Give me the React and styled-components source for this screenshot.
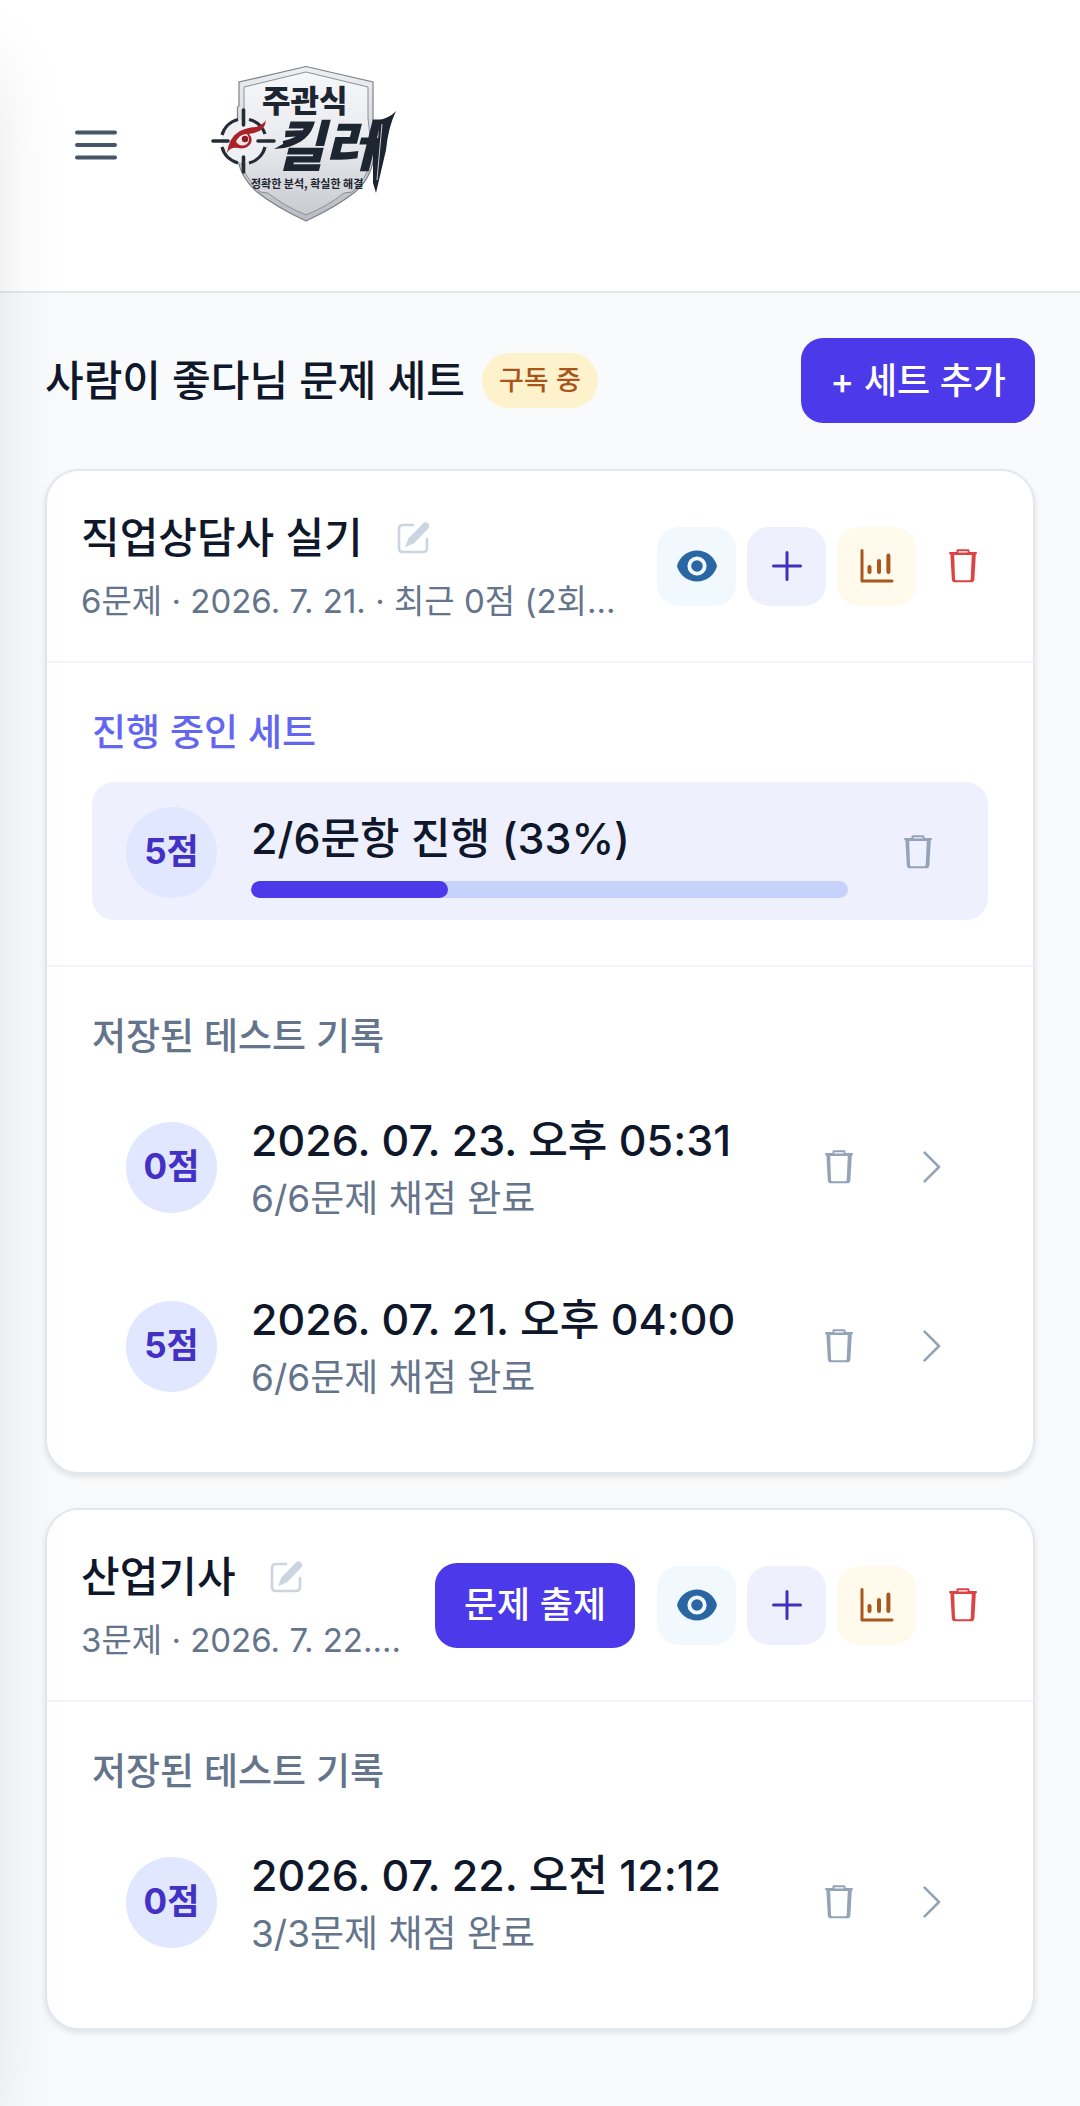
import React from "react";
import styled, { createGlobalStyle } from "styled-components";

const GlobalStyle = createGlobalStyle`
  *, *::before, *::after { box-sizing: border-box; }
  body {
    margin: 0;
    background: #f9fafc;
    color: #0f172a;
    font-family: Inter, "Noto Sans CJK KR", sans-serif;
    overflow-x: hidden;
  }
  button { font: inherit; border: 0; padding: 0; background: none; cursor: pointer; }
  h1, h2, h3, p, ul { margin: 0; padding: 0; }
  ul { list-style: none; }
  svg { display: block; flex: none; }
`;

const Page = styled.div`
  min-height: 100vh;
`;

const Drawer = styled.aside`
  position: fixed;
  inset: 0 auto 0 0;
  width: 720px;
  transform: translateX(-100%);
  background: #fff;
  box-shadow: 0 50px 80px -20px rgba(0, 0, 0, 0.15);
  pointer-events: none;
  z-index: 2;
`;

const Header = styled.header`
  display: flex;
  align-items: center;
  gap: 23px;
  padding: 33px 45px 35px;
  background: #fff;
  border-bottom: 2px solid #e2e8f0;
`;

const MenuButton = styled.button`
  display: grid;
  place-items: center;
  width: 102px;
  height: 102px;
  color: #475569;
`;

const Main = styled.main`
  padding: 45px 45px 76px;
`;

const TitleBar = styled.div`
  display: flex;
  align-items: center;
  justify-content: space-between;
  margin-bottom: 46px;
`;

const TitleGroup = styled.div`
  display: flex;
  align-items: center;
  gap: 17px;
`;

const PageTitle = styled.h1`
  font-size: 42px;
  line-height: 64px;
  font-weight: 500;
`;

const Badge = styled.span`
  padding: 0 17px;
  border-radius: 28px;
  background: #fdf2cc;
  color: #a8551c;
  font-size: 27px;
  line-height: 55px;
  font-weight: 500;
`;

const PrimaryButton = styled.button`
  height: 85px;
  padding: 0 29px;
  border-radius: 22px;
  background: #4b39ea;
  color: #fff;
  font-size: 36px;
  line-height: 56px;
  font-weight: 500;
  white-space: nowrap;
`;

const CardList = styled.div`
  display: flex;
  flex-direction: column;
  gap: 34px;
`;

const Card = styled.article`
  border: 2px solid #e2e8f0;
  border-radius: 34px;
  background: #fff;
  box-shadow: 0 3px 6px rgba(0, 0, 0, 0.1);
`;

const CardHead = styled.div`
  display: flex;
  align-items: center;
  gap: 22px;
  padding: 31px 34px;
`;

const CardInfo = styled.div`
  flex: 1;
  min-width: 0;
  padding-top: 2px;
`;

const CardTitleRow = styled.div`
  display: flex;
  align-items: center;
  gap: 34px;
  height: 68px;
`;

const CardTitle = styled.h2`
  font-size: 42px;
  line-height: 68px;
  font-weight: 500;
`;

const EditButton = styled.button`
  color: #cbd5e1;
`;

const Meta = styled.p`
  color: #64748b;
  font-size: 33px;
  line-height: 58px;
  white-space: nowrap;
`;

const Actions = styled.div`
  display: flex;
  align-items: center;
  gap: 11px;
`;

const IconButton = styled.button`
  display: grid;
  place-items: center;
  width: ${(p) => (p.$bg ? "79px" : "72px")};
  height: 79px;
  border-radius: 22px;
  background: ${(p) => p.$bg || "none"};
  color: ${(p) => p.$color || "#94a3b8"};
`;

const Section = styled.section`
  padding: 45px;
  border-top: 2px solid #f1f5f9;
`;

const SectionTitle = styled.h3`
  margin-bottom: 24px;
  color: ${(p) => (p.$active ? "#6366f1" : "#64748b")};
  font-size: 37px;
  line-height: 50px;
  font-weight: 500;
`;

const ProgressRow = styled.div`
  display: flex;
  align-items: center;
  gap: 34px;
  padding: 24px 34px 22px;
  border-radius: 22px;
  background: #eef0fe;
`;

const Score = styled.span`
  display: grid;
  place-items: center;
  flex: none;
  width: 91px;
  height: 91px;
  padding-bottom: 8px;
  border-radius: 50%;
  background: #e0e7ff;
  color: #4330c4;
  font-size: 35px;
  font-weight: 700;
`;

const RowText = styled.div`
  flex: 1;
  min-width: 0;
`;

const RowTitle = styled.p`
  font-size: 43px;
  line-height: 64px;
  font-weight: 500;
  white-space: nowrap;
`;

const RowSub = styled.p`
  color: #64748b;
  font-size: 37px;
  line-height: 54px;
`;

const Track = styled.div`
  height: 17px;
  margin-top: 11px;
  border-radius: 9px;
  background: #c7d2fb;
  overflow: hidden;
`;

const Fill = styled.div`
  height: 100%;
  border-radius: 9px;
  background: #4b39ea;
`;

const RecordList = styled.ul`
  display: flex;
  flex-direction: column;
  gap: 17px;
`;

const RecordRow = styled.li`
  display: flex;
  align-items: center;
  gap: 34px;
  padding: 22px 34px;
`;

const OpenButton = styled.button`
  display: grid;
  place-items: center;
  width: 45px;
  height: 79px;
  color: #94a3b8;
`;

const MenuIcon = () => (
  <svg width="42" height="30" viewBox="0 0 42 30" fill="none" stroke="currentColor" strokeWidth="4" strokeLinecap="round" aria-hidden="true">
    <path d="M2 2.5H40M2 15H40M2 27.5H40" />
  </svg>
);

const EditIcon = () => (
  <svg width="34" height="34" viewBox="0 0 34 34" fill="none" aria-hidden="true">
    <path d="M16 4H6Q2 4 2 8V27Q2 31 6 31H26Q30 31 30 27V18" stroke="currentColor" strokeWidth="2.6" strokeLinecap="round" />
    <path d="M26 2.5Q28.5 0 31 2.4Q33.4 5 31 7.8L17 22.3L8 26.2L11.5 17.2Z" fill="currentColor" />
  </svg>
);

const TrashIcon = () => (
  <svg width="28" height="34" viewBox="0 0 28 34" fill="currentColor" aria-hidden="true">
    <path
      fillRule="evenodd"
      d="M7.5 3V1.5Q7.5 .3 9 .3H19Q20.5 .3 20.5 1.5V3H27.2Q28 3.2 28 4.2Q28 5.2 26.8 5.4L25.4 30.2Q25.2 33.3 22.2 33.3H6Q3 33.3 2.8 30.2L1.4 5.4Q0 5.2 0 4.2Q0 3.2 .8 3ZM9.4 3.4H18.6V2.2H9.4ZM5.2 6L6 30Q6.1 31.2 7.3 31.2H20.4Q21.6 31.2 21.7 30L22.8 6Z"
    />
  </svg>
);

const EyeIcon = () => (
  <svg width="40" height="32" viewBox="0 0 40 32" aria-hidden="true">
    <path d="M20 .5C30 .5 37 7 39.6 14.5Q40 16 39.6 17.5C37 25 30 31.5 20 31.5S3 25 .4 17.5Q0 16 .4 14.5C3 7 10 .5 20 .5Z" fill="currentColor" />
    <circle cx="20" cy="16" r="7.7" fill="none" stroke="#f2f9ff" strokeWidth="3.8" />
  </svg>
);

const PlusIcon = () => (
  <svg width="30" height="30" viewBox="0 0 30 30" fill="none" stroke="currentColor" strokeWidth="3" strokeLinecap="round" aria-hidden="true">
    <path d="M15 1.5V28.5M1.5 15H28.5" />
  </svg>
);

const ChartIcon = () => (
  <svg width="34" height="34" viewBox="0 0 34 34" fill="none" stroke="currentColor" strokeLinecap="round" strokeLinejoin="round" aria-hidden="true">
    <path d="M2 1.5V32H32" strokeWidth="3" />
    <path d="M9.5 18V23M19 12V23M28.4 6.5V23" strokeWidth="4" />
  </svg>
);

const ChevronIcon = () => (
  <svg width="18" height="32" viewBox="0 0 18 32" fill="none" stroke="currentColor" strokeWidth="2.6" strokeLinecap="round" strokeLinejoin="round" aria-hidden="true">
    <path d="M1.6 1.6L16 16L1.6 30.4" />
  </svg>
);

const LogoText = styled.text`
  font-family: "Noto Sans CJK KR", sans-serif;
  font-size: ${(p) => p.$size};
  font-weight: ${(p) => p.$weight};
  font-style: ${(p) => (p.$slanted ? "italic" : "normal")};
  fill: #1d2531;
`;

const Logo = () => (
  <svg width="268" height="223" viewBox="170 33 268 223" role="img" aria-label="주관식 킬러">
    <defs>
      <linearGradient id="shield" x1="0" y1="0" x2="0" y2="1">
        <stop offset="0" stopColor="#f6f7f9" />
        <stop offset="0.5" stopColor="#e9eaee" />
        <stop offset="1" stopColor="#c9cbd0" />
      </linearGradient>
      <linearGradient id="rim" x1="0" y1="0" x2="0" y2="1">
        <stop offset="0" stopColor="#eeeff2" />
        <stop offset="1" stopColor="#b9bcc2" />
      </linearGradient>
    </defs>
    <path d="M306 66.5L239 82V106L237.5 107V155Q239 176 257 192Q276 207 306 221Q336 207 355 192Q374 176 374 150L373 118V82Z" fill="url(#rim)" stroke="#7c8088" strokeWidth="1.2" />
    <path d="M306 72L244 87V120L240 160Q245 178 260 192L268 193Q284 206 306 215Q328 206 344 193L352 192Q369 177 372 155L368 118V87Z" fill="url(#shield)" stroke="#8b8f97" strokeWidth="1" />
    <circle cx="243.5" cy="141" r="22" fill="#eff0f3" />
    <g fill="none" stroke="#252c36" strokeWidth="3.2">
      <path d="M249 119.5A22 22 0 0 1 265 134M265 147A22 22 0 0 1 249 163M238 163A22 22 0 0 1 222 147M222 135A22 22 0 0 1 238 119.5" />
      <path d="M243.5 110V125M243.5 157V172M213 141H228M258 141H274" strokeWidth="3.6" strokeLinecap="round" />
    </g>
    <path d="M227 153Q229 137 240 131Q249 127 256 127Q263 125 266 120Q265 131 254 133L249 134Q253 138 251 143Q247 150 238 148Q230 147 227 153Z" fill="#a9222a" />
    <path d="M236 142Q239 134 247 134Q251 140 247 144Q241 148 236 142Z" fill="#f3e6e7" />
    <circle cx="245" cy="139" r="3.2" fill="#8c1a22" />
    <LogoText x="262" y="112" $size="31px" $weight="900">주관식</LogoText>
    <LogoText x="274" y="166" $size="55px" $weight="900" $slanted>킬러</LogoText>
    <path d="M274 149L290 140L284 148Z" fill="#1d2531" />
    <path d="M371 138H378L380 120Q391 117 396 111Q388 128 386 150L376 193L373 183V146H369Z" fill="#1d2531" />
    <path d="M382 124L377 180" stroke="#c9ccd2" strokeWidth="1" />
    <LogoText x="251" y="188" $size="11px" $weight="700">정확한 분석, 확실한 해결</LogoText>
  </svg>
);

function DeleteButton({ label, color }) {
  return (
    <IconButton type="button" aria-label={label} $color={color}>
      <TrashIcon />
    </IconButton>
  );
}

function StudySet({ title, meta, canCreate, progress, records }) {
  return (
    <Card>
      <CardHead>
        <CardInfo>
          <CardTitleRow>
            <CardTitle>{title}</CardTitle>
            <EditButton type="button" aria-label="이름 수정"><EditIcon /></EditButton>
          </CardTitleRow>
          <Meta>{meta}</Meta>
        </CardInfo>
        {canCreate && <PrimaryButton type="button">문제 출제</PrimaryButton>}
        <Actions>
          <IconButton type="button" aria-label="보기" $bg="#f1f8fe" $color="#2a66a2"><EyeIcon /></IconButton>
          <IconButton type="button" aria-label="추가" $bg="#eef0fe" $color="#4330b8"><PlusIcon /></IconButton>
          <IconButton type="button" aria-label="통계" $bg="#fffaeb" $color="#a8581f"><ChartIcon /></IconButton>
          <DeleteButton label="세트 삭제" color="#dc4444" />
        </Actions>
      </CardHead>
      {progress && (
        <Section>
          <SectionTitle $active>진행 중인 세트</SectionTitle>
          <ProgressRow>
            <Score>{progress.score}점</Score>
            <RowText>
              <RowTitle>{`${progress.done}/${progress.total}문항 진행 (${progress.percent}%)`}</RowTitle>
              <Track role="progressbar" aria-valuenow={progress.percent} aria-valuemin={0} aria-valuemax={100}>
                <Fill style={{ width: `${progress.percent}%` }} />
              </Track>
            </RowText>
            <DeleteButton label="진행 삭제" />
          </ProgressRow>
        </Section>
      )}
      <Section>
        <SectionTitle>저장된 테스트 기록</SectionTitle>
        <RecordList>
          {records.map((r) => (
            <RecordRow key={r.date}>
              <Score>{r.score}점</Score>
              <RowText>
                <RowTitle>{r.date}</RowTitle>
                <RowSub>{r.summary}</RowSub>
              </RowText>
              <DeleteButton label="기록 삭제" />
              <OpenButton type="button" aria-label="기록 열기"><ChevronIcon /></OpenButton>
            </RecordRow>
          ))}
        </RecordList>
      </Section>
    </Card>
  );
}

const sets = [
  {
    title: "직업상담사 실기",
    meta: "6문제 · 2026. 7. 21. · 최근 0점 (2회...",
    progress: { score: 5, done: 2, total: 6, percent: 33 },
    records: [
      { score: 0, date: "2026. 07. 23. 오후 05:31", summary: "6/6문제 채점 완료" },
      { score: 5, date: "2026. 07. 21. 오후 04:00", summary: "6/6문제 채점 완료" },
    ],
  },
  {
    title: "산업기사",
    meta: "3문제 · 2026. 7. 22....",
    canCreate: true,
    records: [{ score: 0, date: "2026. 07. 22. 오전 12:12", summary: "3/3문제 채점 완료" }],
  },
];

export default function App() {
  return (
    <Page>
      <GlobalStyle />
      <Drawer aria-hidden="true" />
      <Header>
        <MenuButton type="button" aria-label="메뉴"><MenuIcon /></MenuButton>
        <Logo />
      </Header>
      <Main>
        <TitleBar>
          <TitleGroup>
            <PageTitle>사람이 좋다님 문제 세트</PageTitle>
            <Badge>구독 중</Badge>
          </TitleGroup>
          <PrimaryButton type="button">+ 세트 추가</PrimaryButton>
        </TitleBar>
        <CardList>
          {sets.map((s) => (
            <StudySet key={s.title} {...s} />
          ))}
        </CardList>
      </Main>
    </Page>
  );
}
